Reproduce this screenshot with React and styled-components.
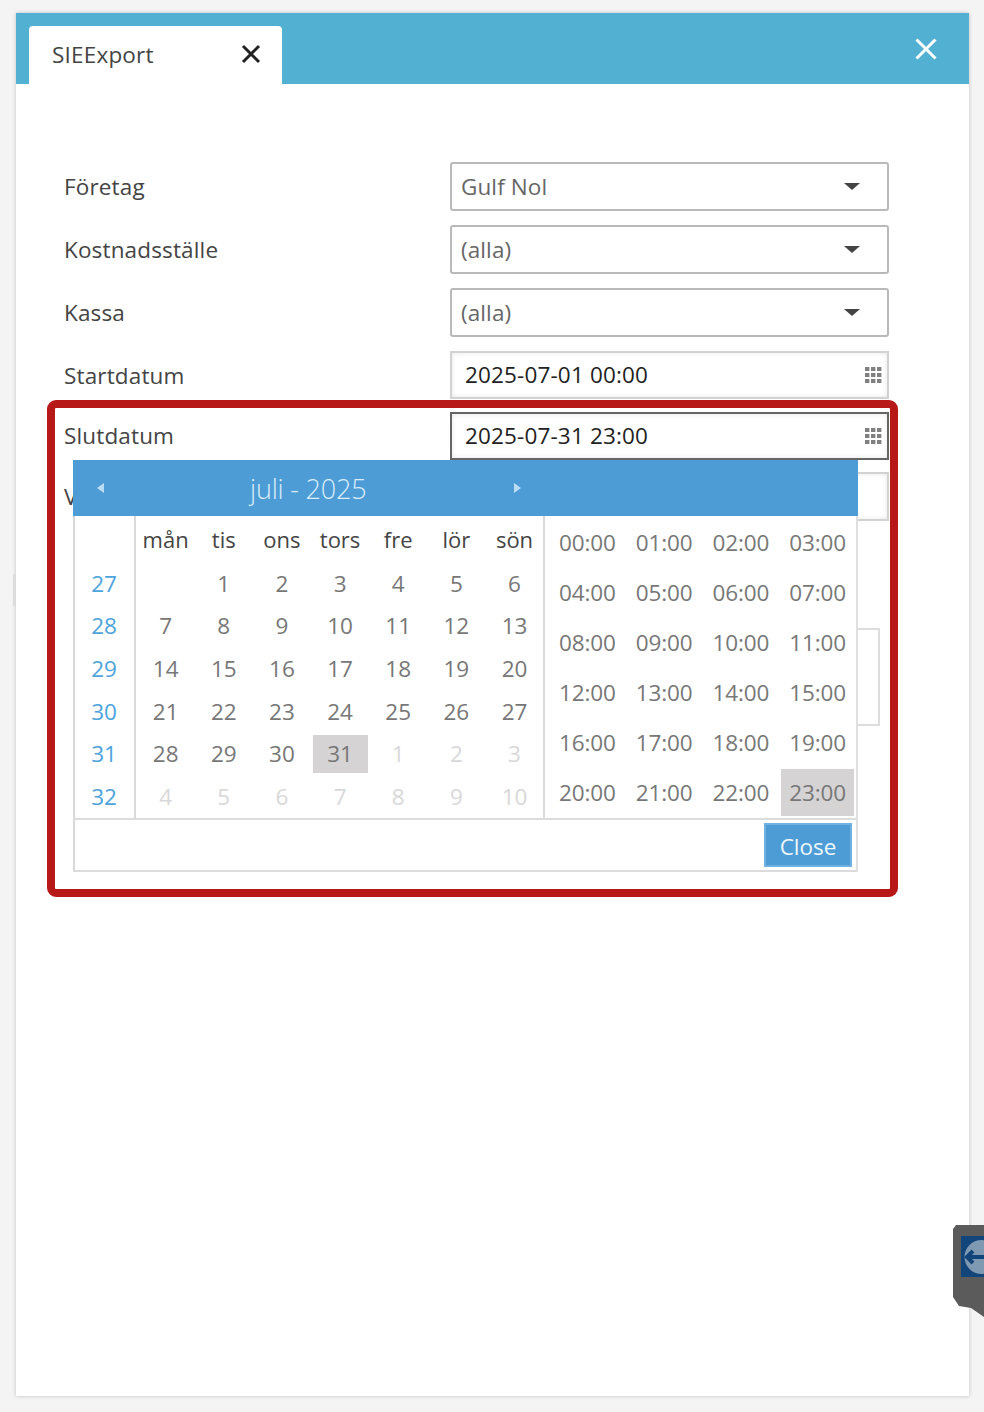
import React from "react";
import styled, { createGlobalStyle } from "styled-components";

const Global = createGlobalStyle`
  html, body { margin: 0; padding: 0; background: #f4f4f4; }
  body { font-family: "Open Sans", "Noto Sans", sans-serif; width: 984px; height: 1412px; overflow: hidden; }
`;
const Page = styled.div`position: relative; width: 984px; height: 1412px; padding: 13px 15px 16px 16px; box-sizing: border-box;`;
const Win = styled.div`
  display: flex; flex-direction: column; height: 100%; background: #fff;
  box-shadow: 0 0 4px rgba(0,0,0,.22);
`;
const Header = styled.div`
  height: 71px; flex: none; background: #52b1d2; display: flex; align-items: flex-end; justify-content: space-between;
  padding: 0 32px 0 13px;
`;
const Tab = styled.div`
  width: 253px; height: 58px; box-sizing: border-box; background: #fff; border-radius: 4px 4px 0 0;
  display: flex; align-items: center; justify-content: space-between; padding: 0 21px 2px 23px;
  font-size: 22.5px; letter-spacing: .2px; color: #444;
`;
const Close = styled.svg`display: block; flex: none;`;
const WinClose = styled(Close)`align-self: center;`;
const Body = styled.div`position: relative; padding: 78px 81px 0 47px; flex: 1;`;
const Row = styled.div`
  display: grid; grid-template-columns: 387px 439px; align-items: center;
  height: ${p => p.$h}px; margin-bottom: ${p => p.$mb}px;
`;
const Label = styled.label`
  font-size: 22.5px; color: #444; font-weight: 500; letter-spacing: .15px; padding-left: 1px;
  padding-bottom: ${p => p.$lift ? 2 : 0}px;
`;
const Select = styled.div`
  height: 100%; box-sizing: border-box; border: 2px solid #b9b9b9; border-radius: 3px; background: #fff;
  display: flex; align-items: center; justify-content: space-between; padding: 0 27px 0 9px;
  font-size: 22.5px; letter-spacing: .1px; color: #666;
`;
const Caret = styled.span`width: 0; height: 0; border-left: 8px solid transparent; border-right: 8px solid transparent; border-top: 7px solid #444;`;
const DateBox = styled.div`
  height: 100%; box-sizing: border-box; border: 2px solid ${p => p.$active ? "#666" : "#d2d2d2"}; background: #fff;
  display: grid; grid-template-columns: 1fr 29px; align-items: center;
  box-shadow: inset 0 0 5px rgba(0,0,0,.1);
`;
const DateText = styled.span`padding-left: 13px; font-size: 22.5px; letter-spacing: .15px; color: #222; margin-top: -2px;`;
const GridIcon = styled.svg`display: block; justify-self: center; margin: -1px 0 0 1px;`;
const TextArea = styled.div`width: 430px; height: 98px; margin: 107px 0 0 387px; box-sizing: border-box; border: 2px solid #ddd; background: #fff;`;

const Smudge = styled.div`
  position: absolute; left: 13px; top: 574px; width: 3px; height: 32px; background: #dcdcdc; border-radius: 2px;
`;
const Annot = styled.div`
  position: absolute; left: 47px; top: 400px; width: 851px; height: 497px; box-sizing: border-box;
  border: 8px solid #b71818; border-radius: 9px; pointer-events: none;
`;
const Popup = styled.div`
  position: absolute; left: 73px; top: 460px; width: 785px; height: 412px; background: #fff;
  display: grid; grid-template-rows: 56px 304px 52px; grid-template-columns: 785px;
`;
const CalHead = styled.div`
  background: #4d9cd6; color: #d6ebf9; display: flex; align-items: center;
  position: relative;
`;
const HeadNav = styled.div`flex: 1; display: flex; align-items: center; justify-content: space-between; padding: 0 337px 0 24px; margin-top: -1px;`;
const Arrow = styled.span`
  width: 0; height: 0; border-top: 5px solid transparent; border-bottom: 5px solid transparent;
  ${p => p.$right ? "border-left: 7px solid #bcdcf3;" : "border-right: 7px solid #bcdcf3;"}
`;
const Month = styled.span`font-size: 27px; font-weight: 300; letter-spacing: -.2px; margin-top: 1px; position: absolute; left: 177px; color: #d9ecfa;`;
const CalBody = styled.div`
  display: grid; grid-template-columns: 61px 409px 311px; border-left: 2px solid #d9d9d9; border-right: 2px solid #e0e0e0; border-bottom: 2px solid #dcdcdc;
`;
const Weeks = styled.div`display: grid; grid-template-rows: 46px repeat(6, 42.6px); border-right: 2px solid #d9d9d9; justify-items: center; align-items: center;`;
const Week = styled.span`font-size: 22.5px; color: #4da3dc; padding-right: 1px;`;
const Days = styled.div`
  display: grid; grid-template-columns: repeat(7, 58.15px); grid-template-rows: 46px repeat(6, 42.6px);
  padding-left: .6px; box-sizing: border-box; border-right: 2px solid #d9d9d9; justify-items: center; align-items: center;
`;
const DayName = styled.span`font-size: 22px; color: #444; padding-bottom: 1px;`;
const Day = styled.span`
  font-size: 22.5px; color: ${p => p.$muted ? "#d8d8d8" : "#777"};
  background: ${p => p.$sel ? "#d5d3d3" : "transparent"};
  width: 55px; height: 38px; display: flex; align-items: center; justify-content: center;
`;
const Times = styled.div`display: grid; grid-template-columns: repeat(4, 76.75px); grid-template-rows: repeat(6, 50.1px); padding: 1px 0 0 4px; justify-items: center; align-items: center;`;
const Time = styled.span`
  font-size: 22.5px; letter-spacing: -.1px; color: #777; background: ${p => p.$sel ? "#d5d3d3" : "transparent"};
  width: 73px; height: 47px; display: flex; align-items: center; justify-content: center;
`;
const Foot = styled.div`
  display: flex; justify-content: flex-end; align-items: center; padding-right: 4px;
  border-left: 2px solid #d9d9d9; border-right: 2px solid #e0e0e0; border-bottom: 2px solid #dcdcdc;
`;
const CloseBtn = styled.button`
  width: 88px; height: 44px; background: #4d9cd6; border: 2px solid #6fb2e2; color: #eef7fd; padding: 2px 0 0;
  font: inherit; font-size: 22.5px;
`;
const Widget = styled.div`
  position: absolute; left: 953px; top: 1225px; width: 31px; height: 92px; background: #5b5b5b;
  clip-path: polygon(3px 0, 100% 0, 100% 100%, 18px 83px, 6px 81px, 0 72px, 0 4px);
`;
const WidgetIcon = styled.svg`position: absolute; left: 8px; top: 11px; display: block;`;

const X = ({ c, s, w }) => (
  <Close width={s} height={s} viewBox="0 0 20 20"><path d="M2 2L18 18M18 2L2 18" stroke={c} strokeWidth={w} fill="none" /></Close>
);
const Dots = () => (
  <GridIcon width="17" height="16" viewBox="0 0 17 16" fill="#808080">
    {[0, 6, 12].flatMap(y => [0, 6, 12].map(x => <rect key={x + "-" + y} x={x} y={y} width="4.4" height="4" />))}
  </GridIcon>
);

const names = ["mån", "tis", "ons", "tors", "fre", "lör", "sön"];
const cells = [
  "", 1, 2, 3, 4, 5, 6, 7, 8, 9, 10, 11, 12, 13, 14, 15, 16, 17, 18, 19, 20,
  21, 22, 23, 24, 25, 26, 27, 28, 29, 30, 31, 1, 2, 3, 4, 5, 6, 7, 8, 9, 10,
];
const hours = Array.from({ length: 24 }, (_, i) => String(i).padStart(2, "0") + ":00");

export default function App() {
  return (
    <Page>
      <Global />
      <Win>
        <Header>
          <Tab>SIEExport <X c="#222" s={20} w={3} /></Tab>
          <WinClose width="22" height="22" viewBox="0 0 22 22"><path d="M1.5 1.5L20.5 20.5M20.5 1.5L1.5 20.5" stroke="#fff" strokeWidth="3" fill="none" /></WinClose>
        </Header>
        <Body>
          <Row $h={49} $mb={14}><Label>Företag</Label><Select>Gulf Nol<Caret /></Select></Row>
          <Row $h={49} $mb={14}><Label>Kostnadsställe</Label><Select>(alla)<Caret /></Select></Row>
          <Row $h={49} $mb={14}><Label>Kassa</Label><Select>(alla)<Caret /></Select></Row>
          <Row $h={48} $mb={13}><Label>Startdatum</Label><DateBox><DateText>2025-07-01 00:00</DateText><Dots /></DateBox></Row>
          <Row $h={48} $mb={12}><Label $lift>Slutdatum</Label><DateBox $active><DateText>2025-07-31 23:00</DateText><Dots /></DateBox></Row>
          <Row $h={49} $mb={0}><Label>Valuta</Label><DateBox /></Row>
          <TextArea />
        </Body>
      </Win>
      <Smudge />
      <Popup>
        <CalHead>
          <HeadNav><Arrow /><Arrow $right /></HeadNav>
          <Month>juli - 2025</Month>
        </CalHead>
        <CalBody>
          <Weeks>
            <span />
            {[27, 28, 29, 30, 31, 32].map(w => <Week key={w}>{w}</Week>)}
          </Weeks>
          <Days>
            {names.map(n => <DayName key={n}>{n}</DayName>)}
            {cells.map((d, i) => <Day key={i} $muted={i > 31} $sel={i === 31}>{d}</Day>)}
          </Days>
          <Times>
            {hours.map(h => <Time key={h} $sel={h === "23:00"}>{h}</Time>)}
          </Times>
        </CalBody>
        <Foot><CloseBtn>Close</CloseBtn></Foot>
      </Popup>
      <Annot />
      <Widget>
        <WidgetIcon width="23" height="41" viewBox="0 0 23 41">
          <rect width="23" height="41" fill="#12457a" />
          <circle cx="20.5" cy="21" r="17" fill="#7f99b3" />
          <path d="M6 21H23M12 15L6 21L12 27" stroke="#12457a" strokeWidth="4" fill="none" />
        </WidgetIcon>
      </Widget>
    </Page>
  );
}
